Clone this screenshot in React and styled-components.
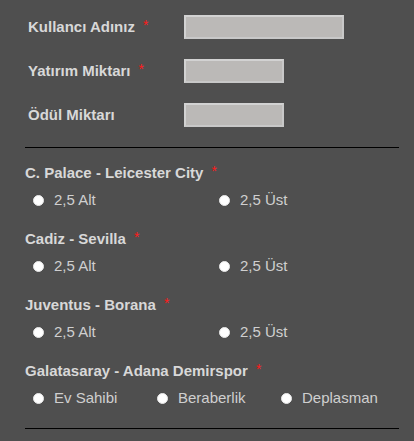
import styled, { createGlobalStyle } from "styled-components";

const GlobalStyle = createGlobalStyle`
  html, body {
    margin: 0;
    padding: 0;
    background: #4f4f4f;
  }
  body {
    font-family: "Liberation Sans", Arial, sans-serif;
  }
`;

const Page = styled.form`
  width: 414px;
  min-height: 441px;
  box-sizing: border-box;
  padding: 15px 15px 0 25px;
  background: #4f4f4f;
`;

const FieldList = styled.div`
  display: flex;
  flex-direction: column;
  gap: 20px;
  padding-left: 3px;
`;

const FieldRow = styled.div`
  display: grid;
  grid-template-columns: 156px 1fr;
  align-items: center;
  height: 24px;
`;

const Label = styled.label`
  font-size: 15px;
  font-weight: bold;
  line-height: 18px;
  color: #d8d8d8;
  white-space: nowrap;
`;

const Required = styled.span`
  color: #ff1a1a;
  font-size: 14px;
  font-weight: normal;
  margin-left: 8px;
  vertical-align: top;
  line-height: 14px;
`;

const TextInput = styled.input`
  box-sizing: border-box;
  width: ${(p) => p.$w}px;
  height: 24px;
  margin: 0;
  padding: 0 4px;
  background: #bbb9b7;
  border: 2px solid #d2d2d2;
  border-right-color: #c8c8c8;
  border-bottom-color: #c8c8c8;
  outline: none;
`;

const Divider = styled.hr`
  border: 0;
  border-top: 1px solid #000;
  margin: ${(p) => p.$top}px 0 0 0;
  width: 374px;
`;

const MatchList = styled.div`
  display: flex;
  flex-direction: column;
  gap: 21px;
  margin-top: 16px;
`;

const Match = styled.fieldset`
  border: 0;
  margin: 0;
  padding: 0;
`;

const Options = styled.div`
  display: grid;
  grid-template-columns: repeat(${(p) => p.$cols}, 1fr);
  width: 372px;
  margin: 9px 0 0 3px;
`;

const Option = styled.label`
  display: flex;
  align-items: center;
  gap: 10px;
  padding-left: 5px;
  font-size: 15px;
  line-height: 18px;
  color: #cfcfcf;
  white-space: nowrap;
`;

const Radio = styled.input.attrs({ type: "radio" })`
  appearance: none;
  -webkit-appearance: none;
  margin: 0;
  width: 11px;
  height: 11px;
  border-radius: 50%;
  background: #fff;
  border: 1px solid #e8e8e8;
  box-sizing: border-box;
  flex-shrink: 0;
`;

const fields = [
  { label: "Kullancı Adınız", required: true, w: 160 },
  { label: "Yatırım Miktarı", required: true, w: 100 },
  { label: "Ödül Miktarı", required: false, w: 100 },
];

const matches = [
  { name: "C. Palace - Leicester City", options: ["2,5 Alt", "2,5 Üst"] },
  { name: "Cadiz - Sevilla", options: ["2,5 Alt", "2,5 Üst"] },
  { name: "Juventus - Borana", options: ["2,5 Alt", "2,5 Üst"] },
  {
    name: "Galatasaray - Adana Demirspor",
    options: ["Ev Sahibi", "Beraberlik", "Deplasman"],
  },
];

export default function App() {
  return (
    <>
      <GlobalStyle />
      <Page onSubmit={(e) => e.preventDefault()}>
        <FieldList>
          {fields.map((f) => (
            <FieldRow key={f.label}>
              <Label>
                {f.label}
                {f.required && <Required>*</Required>}
              </Label>
              <TextInput $w={f.w} />
            </FieldRow>
          ))}
        </FieldList>

        <Divider $top={20} />

        <MatchList>
          {matches.map((m, i) => (
            <Match key={m.name}>
              <Label as="div">
                {m.name}
                <Required>*</Required>
              </Label>
              <Options $cols={m.options.length}>
                {m.options.map((o) => (
                  <Option key={o}>
                    <Radio name={`match-${i}`} value={o} />
                    {o}
                  </Option>
                ))}
              </Options>
            </Match>
          ))}
        </MatchList>

        <Divider $top={21} />
      </Page>
    </>
  );
}
